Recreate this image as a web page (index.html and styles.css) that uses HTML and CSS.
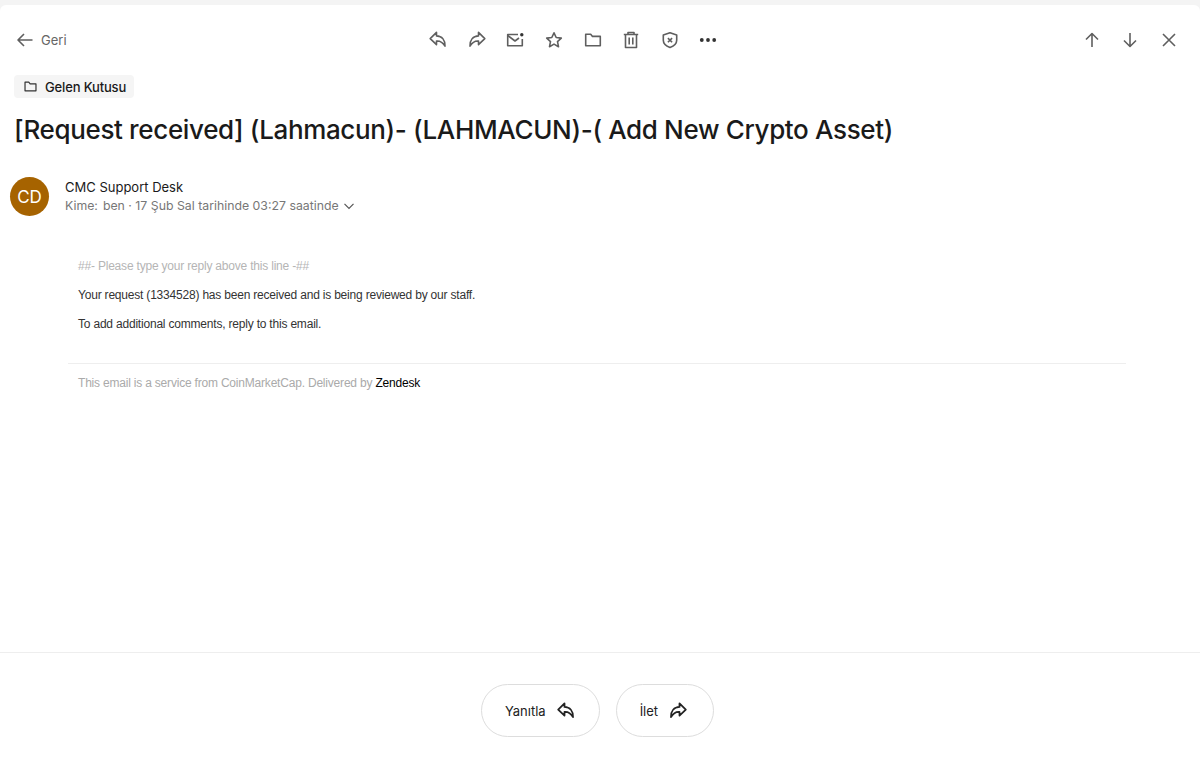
FILE: index.html
```html
<!DOCTYPE html>
<html lang="tr">
<head>
    <meta charset="UTF-8">
    <meta name="viewport" content="width=device-width, initial-scale=1.0">
    <title>[Request received] (Lahmacun)- (LAHMACUN)-( Add New Crypto Asset)</title>
    <link rel="stylesheet" href="styles.css">
</head>
<body>
    <svg class="icon-defs" width="0" height="0" aria-hidden="true">
        <symbol id="i-reply" viewBox="0 0 20 20"><path d="M8.500 2.800 2.200 9l6.300 6v-3.600c3.300-.3 6 .9 8.500 5.100.2-6.100-3.100-10-8.500-10.200z" transform="translate(0 -.4)"/></symbol>
        <symbol id="i-forward" viewBox="0 0 20 20"><path d="M11.500 2.800 17.800 9l-6.300 6v-3.600c-3.300-.3-6 .9-8.500 5.100-.2-6.100 3.100-10 8.500-10.200z" transform="translate(0 -.4)"/></symbol>
        <symbol id="i-folder" viewBox="0 0 20 20"><path d="M2.700 4.200h5l1.800 2.200h7.800v9.400H2.700z"/></symbol>
    </svg>

    <div class="mail-view">
        <header class="toolbar">
            <a class="back-link">
                <svg class="icon" viewBox="0 0 20 20"><path d="M17.500 10H3M9 4l-6 6 6 6"/></svg>
                <span>Geri</span>
            </a>
            <div class="toolbar-actions">
                <svg class="icon"><use href="#i-reply"/></svg>
                <svg class="icon"><use href="#i-forward"/></svg>
                <svg class="icon" viewBox="0 0 20 20"><path d="M13 4.500H2.700v11.300h14.600V9"/><path d="m2.700 5.500 7.300 5.500 4-3"/><circle class="dot" cx="16.800" cy="4.800" r="1.700"/></svg>
                <svg class="icon" viewBox="0 0 20 20"><path d="m10 2.800 2.200 4.700 5.100.6-3.800 3.500 1 5.100-4.500-2.600-4.500 2.600 1-5.100-3.800-3.500 5.100-.6z"/></svg>
                <svg class="icon"><use href="#i-folder"/></svg>
                <svg class="icon" viewBox="0 0 20 20"><path d="M2.800 4.500h14.400M7 4.500V2.500h6v2M4.500 4.500v13h11v-13M8.200 7.500v7M11.800 7.500v7"/></svg>
                <svg class="icon" viewBox="0 0 20 20"><path d="M10 2.700 16.700 5v5.200c0 3.400-2.800 5.800-6.700 7.300-3.900-1.500-6.700-3.900-6.700-7.300V5z"/><path d="m7.900 8.100 4.200 4.200M12.100 8.100l-4.200 4.200"/></svg>
                <svg class="icon" viewBox="0 0 20 20"><circle class="dot" cx="3.800" cy="10" r="1.900"/><circle class="dot" cx="10" cy="10" r="1.900"/><circle class="dot" cx="16.200" cy="10" r="1.900"/></svg>
            </div>
            <div class="toolbar-nav">
                <svg class="icon" viewBox="0 0 20 20"><path d="M10 17V3.500M4 9.500l6-6 6 6"/></svg>
                <svg class="icon" viewBox="0 0 20 20"><path d="M10 3v13.500M4 10.500l6 6 6-6"/></svg>
                <svg class="icon" viewBox="0 0 20 20"><path d="m4 4 12 12M16 4 4 16"/></svg>
            </div>
        </header>

        <main class="mail-main">
            <span class="folder-tag">
                <svg class="icon icon-small"><use href="#i-folder"/></svg>
                Gelen Kutusu
            </span>
            <h1 class="subject">[Request received] (Lahmacun)- (LAHMACUN)-( Add New Crypto Asset)</h1>

            <div class="sender">
                <div class="avatar">CD</div>
                <div class="sender-info">
                    <div class="sender-name">CMC Support Desk</div>
                    <div class="sender-meta">
                        <span class="meta-label">Kime:</span>
                        <span>ben · 17 Şub Sal tarihinde 03:27 saatinde</span>
                        <svg class="chevron" viewBox="0 0 12 12"><path d="m1.500 3.800 4.500 4.500 4.500-4.500"/></svg>
                    </div>
                </div>
            </div>

            <div class="mail-body">
                <p class="muted">##- Please type your reply above this line -##</p>
                <p>Your request (1334528) has been received and is being reviewed by our staff.</p>
                <p>To add additional comments, reply to this email.</p>
                <div class="mail-footer">
                    This email is a service from CoinMarketCap. Delivered by <a class="zendesk">Zendesk</a>
                </div>
            </div>
        </main>

        <footer class="reply-bar">
            <button class="reply-btn reply-btn-wide">
                Yanıtla
                <svg class="icon icon-dark"><use href="#i-reply"/></svg>
            </button>
            <button class="reply-btn">
                İlet
                <svg class="icon icon-dark"><use href="#i-forward"/></svg>
            </button>
        </footer>
    </div>
</body>
</html>
```

FILE: styles.css
```css
* {
    box-sizing: border-box;
}
html, body {
    height: 100%;
}
body {
    margin: 0;
    padding-top: 5px;
    background-color: #f4f4f4;
    font-family: Inter, "Noto Sans", sans-serif;
    color: #1a1a1a;
}
.icon-defs {
    position: absolute;
}
.mail-view {
    height: 766px;
    display: flex;
    flex-direction: column;
    background-color: #ffffff;
    border-radius: 6px 6px 0 0;
}
.icon {
    width: 20px;
    height: 20px;
    flex: none;
    fill: none;
    stroke: #5f5f5f;
    stroke-width: 1.6;
    stroke-linejoin: round;
}
.icon .dot {
    fill: #333333;
    stroke: none;
}
.toolbar {
    height: 70px;
    flex: none;
    padding: 0 21px 0 15px;
    display: flex;
    align-items: center;
    justify-content: space-between;
}
.back-link {
    width: 50px;
    display: flex;
    align-items: center;
    gap: 6px;
    font-size: 13px;
    color: #666666;
}
.toolbar-actions {
    display: flex;
    gap: 18.600px;
}
.toolbar-nav {
    display: flex;
    gap: 18.700px;
}
.mail-main {
    flex: 1;
    padding: 0 0 0 10px;
}
.folder-tag {
    margin-left: 4px;
    height: 23px;
    padding: 0 8px 0 9px;
    display: inline-flex;
    align-items: center;
    gap: 7px;
    font-size: 13px;
    font-weight: 500;
    letter-spacing: -0.15px;
    background-color: #f5f5f5;
    border-radius: 4px;
}
.icon-small {
    width: 15px;
    height: 15px;
    stroke: #333333;
}
.subject {
    margin: 14px 0 0 4px;
    font-size: 26px;
    line-height: 36px;
    font-weight: 500;
    letter-spacing: -0.35px;
}
.sender {
    margin-top: 29px;
    display: flex;
    align-items: flex-start;
    gap: 16px;
}
.avatar {
    width: 39px;
    height: 39px;
    display: flex;
    align-items: center;
    justify-content: center;
    background-color: #a66300;
    color: #ffffff;
    border-radius: 50%;
    font-size: 17px;
}
.sender-info {
    padding-top: 1px;
}
.sender-name {
    font-size: 13px;
    line-height: 18px;
}
.sender-meta {
    display: flex;
    align-items: center;
    font-size: 12.300px;
    line-height: 20px;
    color: #777777;
}
.meta-label {
    margin-right: 5px;
}
.chevron {
    width: 12px;
    height: 12px;
    margin-left: 4px;
    fill: none;
    stroke: #555555;
    stroke-width: 1.200;
}
.mail-body {
    margin: 43px 74px 0 58px;
    font-family: "Liberation Sans", Arial, sans-serif;
    font-size: 12px;
    letter-spacing: -0.2px;
    color: #333333;
}
.mail-body p {
    margin: 0 0 15px 10px;
    line-height: 14px;
}
.mail-body .muted {
    color: #b5b5b5;
}
.mail-footer {
    margin-top: 32px;
    padding: 12px 0 0 10px;
    border-top: 1px solid #eeeeee;
    color: #aaaaaa;
}
.zendesk {
    color: #000000;
}
.reply-bar {
    height: 119px;
    flex: none;
    padding: 31px 5px 0 0;
    border-top: 1px solid #eeeeee;
    display: flex;
    justify-content: center;
    gap: 16px;
}
.reply-btn {
    height: 53px;
    padding: 0 25px 0 23px;
    display: flex;
    align-items: center;
    gap: 10px;
    background-color: #ffffff;
    border: 1px solid #dddddd;
    border-radius: 27px;
    font-family: inherit;
    font-size: 13px;
    color: #222222;
}
.reply-btn-wide {
    padding: 0 23px;
}
.icon-dark {
    stroke: #222222;
    stroke-width: 1.800;
}
```
